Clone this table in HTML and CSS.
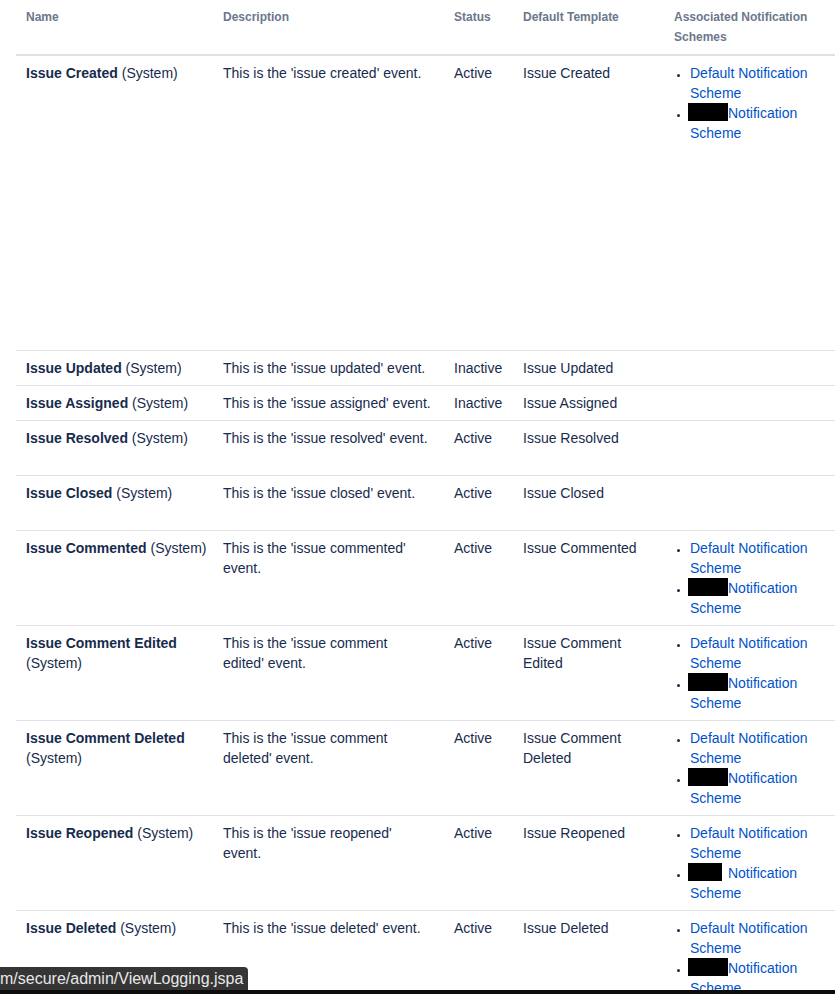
FILE: index.html
```html
<!DOCTYPE html>
<html>
<head>
<meta charset="utf-8">
<link rel="stylesheet" href="styles.css">
</head>
<body>
<div class="page">
<table class="events">
  <colgroup>
    <col class="c-name"><col class="c-desc"><col class="c-status"><col class="c-tpl"><col class="c-schemes">
  </colgroup>
  <thead>
    <tr>
      <th>Name</th>
      <th>Description</th>
      <th>Status</th>
      <th>Default Template</th>
      <th>Associated Notification Schemes</th>
    </tr>
  </thead>
  <tbody>
    <tr class="tall">
      <td class="name"><b>Issue Created</b> (System)</td>
      <td class="desc">This is the 'issue created' event.</td>
      <td class="status">Active</td>
      <td>Issue Created</td>
      <td><ul class="schemes"><li><a href="#">Default Notification Scheme</a></li><li><a href="#"><span class="redact"></span>Notification Scheme</a></li></ul></td>
    </tr>
    <tr>
      <td class="name"><b>Issue Updated</b> (System)</td>
      <td class="desc">This is the 'issue updated' event.</td>
      <td class="status">Inactive</td>
      <td>Issue Updated</td>
      <td></td>
    </tr>
    <tr>
      <td class="name"><b>Issue Assigned</b> (System)</td>
      <td class="desc">This is the 'issue assigned' event.</td>
      <td class="status">Inactive</td>
      <td>Issue Assigned</td>
      <td></td>
    </tr>
    <tr>
      <td class="name"><b>Issue Resolved</b> (System)</td>
      <td class="desc">This is the 'issue resolved' event.</td>
      <td class="status">Active</td>
      <td>Issue Resolved</td>
      <td><ul class="schemes empty"></ul></td>
    </tr>
    <tr>
      <td class="name"><b>Issue Closed</b> (System)</td>
      <td class="desc">This is the 'issue closed' event.</td>
      <td class="status">Active</td>
      <td>Issue Closed</td>
      <td><ul class="schemes empty"></ul></td>
    </tr>
    <tr>
      <td class="name"><b>Issue Commented</b> (System)</td>
      <td class="desc">This is the 'issue commented' event.</td>
      <td class="status">Active</td>
      <td>Issue Commented</td>
      <td><ul class="schemes"><li><a href="#">Default Notification Scheme</a></li><li><a href="#"><span class="redact"></span>Notification Scheme</a></li></ul></td>
    </tr>
    <tr>
      <td class="name"><b>Issue Comment Edited</b> (System)</td>
      <td class="desc">This is the 'issue comment edited' event.</td>
      <td class="status">Active</td>
      <td>Issue Comment Edited</td>
      <td><ul class="schemes"><li><a href="#">Default Notification Scheme</a></li><li><a href="#"><span class="redact"></span>Notification Scheme</a></li></ul></td>
    </tr>
    <tr>
      <td class="name"><b>Issue Comment Deleted</b> (System)</td>
      <td class="desc">This is the 'issue comment deleted' event.</td>
      <td class="status">Active</td>
      <td>Issue Comment Deleted</td>
      <td><ul class="schemes"><li><a href="#">Default Notification Scheme</a></li><li><a href="#"><span class="redact"></span>Notification Scheme</a></li></ul></td>
    </tr>
    <tr>
      <td class="name"><b>Issue Reopened</b> (System)</td>
      <td class="desc">This is the 'issue reopened' event.</td>
      <td class="status">Active</td>
      <td>Issue Reopened</td>
      <td><ul class="schemes"><li><a href="#">Default Notification Scheme</a></li><li><a href="#"><span class="redact short"></span> Notification Scheme</a></li></ul></td>
    </tr>
    <tr>
      <td class="name"><b>Issue Deleted</b> (System)</td>
      <td class="desc">This is the 'issue deleted' event.</td>
      <td class="status">Active</td>
      <td>Issue Deleted</td>
      <td><ul class="schemes"><li><a href="#">Default Notification Scheme</a></li><li><a href="#"><span class="redact"></span>Notification Scheme</a></li></ul></td>
    </tr>
  </tbody>
</table>
</div>
<div class="status-url">m/secure/admin/ViewLogging.jspa</div>
<div class="screen-edge"></div>
</body>
</html>
```
FILE: styles.css
```css
html, body {
  margin: 0;
  padding: 0;
  background: #fff;
}
body {
  font-family: "Liberation Sans", Arial, sans-serif;
  font-size: 14px;
  line-height: 20px;
  color: #172b4d;
}
.page {
  padding-left: 16px;
}
.events {
  width: 819px;
  table-layout: fixed;
  border-collapse: collapse;
  border-spacing: 0;
}
.c-name { width: 197px; }
.c-desc { width: 231px; }
.c-status { width: 69px; }
.c-tpl { width: 151px; }
.c-schemes { width: 171px; }

.events th {
  text-align: left;
  vertical-align: top;
  font-size: 12px;
  font-weight: bold;
  line-height: 20px;
  color: #6b778c;
  padding: 7px 10px 7px 10px;
  border-bottom: 2px solid #dfe1e6;
}
.events td {
  vertical-align: top;
  padding: 7px 10px;
  border-bottom: 1px solid #dfe1e6;
}
.events td.name {
  padding-right: 4px;
}
.events td.desc {
  padding-right: 13px;
}
.events td.status {
  white-space: nowrap;
}
.events b {
  font-weight: bold;
}
.events tr.tall {
  height: 295px;
}
.schemes {
  margin: 0;
  padding: 0 0 0 16px;
  list-style: disc;
}
.schemes.empty {
  height: 40px;
}
.schemes li::marker {
  font-size: 11px;
}
.schemes a {
  color: #0052cc;
  text-decoration: none;
}
.redact {
  display: inline-block;
  width: 40px;
  height: 18px;
  margin-left: -2px;
  background: #000;
  vertical-align: top;
}
.redact.short {
  width: 34px;
  margin-right: 2px;
}
.status-url {
  position: fixed;
  left: 0;
  bottom: 4px;
  height: 23px;
  line-height: 23px;
  padding: 0 5px 0 0;
  background: #353535;
  color: #e8e8e8;
  font-size: 16px;
  border-top-right-radius: 4px;
  white-space: nowrap;
}
.screen-edge {
  position: fixed;
  left: 0;
  right: 0;
  bottom: 0;
  height: 4px;
  background: #0c0c0c;
}
```
